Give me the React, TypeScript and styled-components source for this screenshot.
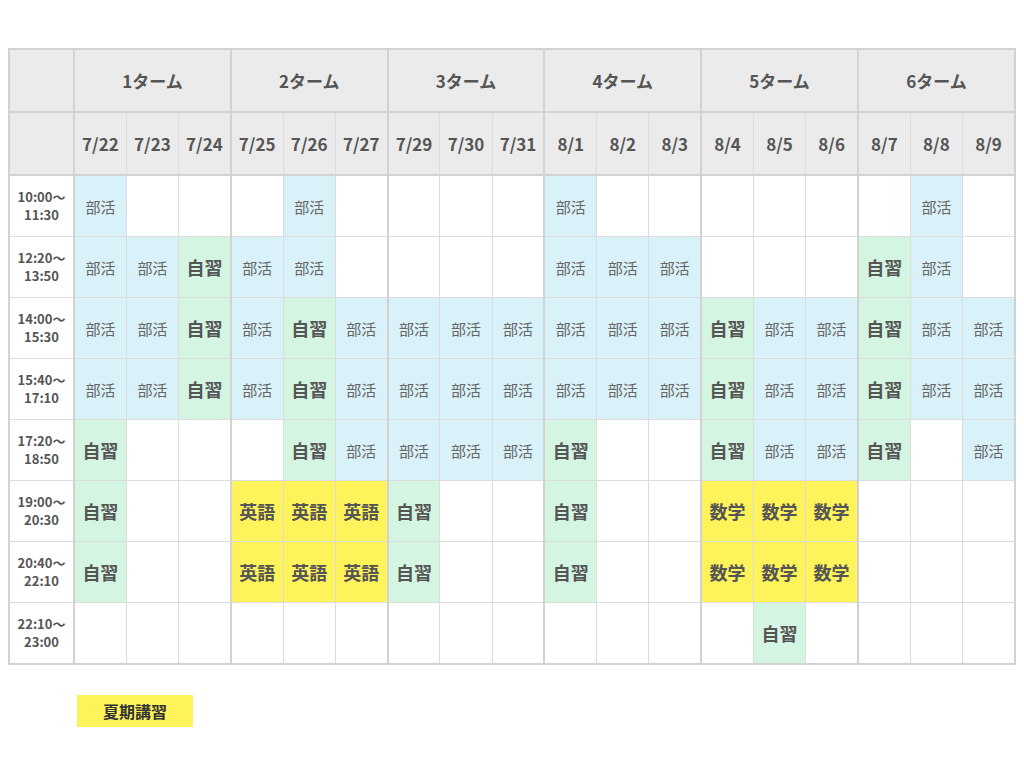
import React from "react";
import styled, { createGlobalStyle } from "styled-components";

const Global = createGlobalStyle`
  html, body { margin: 0; background: #fff; }
  body { font-family: "Noto Sans CJK JP", "Noto Sans", sans-serif; color: #555; }
`;

const Page = styled.div`
  padding: 48px 8px 0 8px;
`;

const Table = styled.table`
  border-collapse: collapse;
  table-layout: fixed;
  width: 1008px;
  border: 2px solid #d2d2d2;
`;

const Th = styled.th<{ $group?: boolean }>`
  background: #ebebeb;
  height: 61px;
  font-size: 17px;
  font-weight: 700;
  color: #555;
  border: 1px solid #dcdcdc;
  border-left: ${(p) => (p.$group ? "2px solid #d2d2d2" : "1px solid #dcdcdc")};
  border-bottom: 2px solid #d2d2d2;
  padding: 0;
`;

const TimeCell = styled.td`
  font-size: 13px;
  font-weight: 700;
  line-height: 18px;
  text-align: center;
  border: 1px solid #dcdcdc;
  border-right: 2px solid #d2d2d2;
  height: 60px;
  padding: 0;
`;

const colors: Record<string, string> = {
  B: "#d9f1f8",
  J: "#d5f5e3",
  E: "#fff35c",
  M: "#fff35c",
  _: "#ffffff",
};
const labels: Record<string, string> = { B: "部活", J: "自習", E: "英語", M: "数学", _: "" };

const Cell = styled.td<{ $k: string; $group: boolean }>`
  background: ${(p) => colors[p.$k]};
  text-align: center;
  padding: 0;
  border: 1px solid #dcdcdc;
  border-left: ${(p) => (p.$group ? "2px solid #d2d2d2" : "1px solid #dcdcdc")};
  font-size: ${(p) => (p.$k === "B" ? "15px" : "18px")};
  font-weight: ${(p) => (p.$k === "B" ? 400 : 700)};
  color: ${(p) => (p.$k === "B" ? "#666" : "#555")};
`;

const Legend = styled.div`
  margin: 30px 0 0 69px;
  width: 116px;
  height: 32px;
  background: #fff35c;
  display: flex;
  align-items: center;
  justify-content: center;
  font-size: 16px;
  font-weight: 700;
  color: #333;
`;

const days = ["7/22","7/23","7/24","7/25","7/26","7/27","7/29","7/30","7/31","8/1","8/2","8/3","8/4","8/5","8/6","8/7","8/8","8/9"];
const times: [string, string][] = [
  ["10:00〜","11:30"],["12:20〜","13:50"],["14:00〜","15:30"],["15:40〜","17:10"],
  ["17:20〜","18:50"],["19:00〜","20:30"],["20:40〜","22:10"],["22:10〜","23:00"],
];
const rows = [
  "B___B____B______B_",
  "BBJBB____BBB___JB_",
  "BBJBJBBBBBBBJBBJBB",
  "BBJBJBBBBBBBJBBJBB",
  "J___JBBBBJ__JBBJ_B",
  "J__EEEJ__J__MMM___",
  "J__EEEJ__J__MMM___",
  "_____________J____",
];

export default function App() {
  return (
    <Page>
      <Global />
      <Table>
        <colgroup>
          <col style={{ width: 65 }} />
          {days.map((d) => <col key={d} />)}
        </colgroup>
        <thead>
          <tr>
            <Th />
            {[1,2,3,4,5,6].map((n) => <Th key={n} colSpan={3} $group>{n}ターム</Th>)}
          </tr>
          <tr>
            <Th />
            {days.map((d, i) => <Th key={d} $group={i % 3 === 0}>{d}</Th>)}
          </tr>
        </thead>
        <tbody>
          {rows.map((r, ri) => (
            <tr key={ri}>
              <TimeCell>{times[ri][0]}<br />{times[ri][1]}</TimeCell>
              {r.split("").map((k, ci) => (
                <Cell key={ci} $k={k} $group={ci % 3 === 0}>{labels[k]}</Cell>
              ))}
            </tr>
          ))}
        </tbody>
      </Table>
      <Legend>夏期講習</Legend>
    </Page>
  );
}
